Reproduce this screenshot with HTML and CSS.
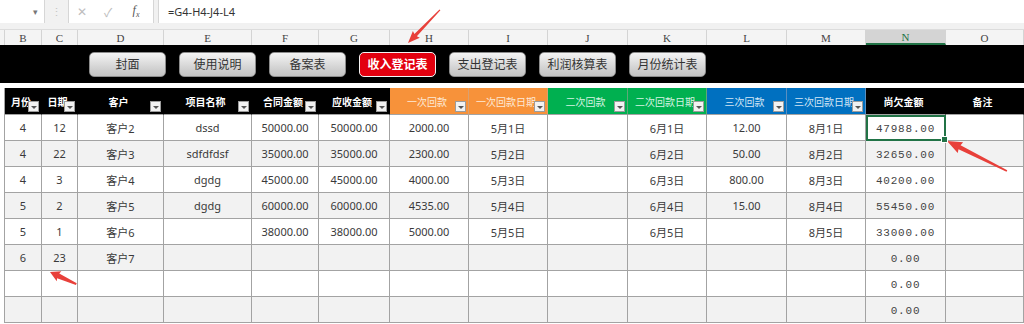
FILE: index.html
```html
<!DOCTYPE html>
<html lang="zh">
<head>
<meta charset="utf-8">
<title>收入登记表</title>
<link rel="stylesheet" href="styles.css">
</head>
<body>
<div class="topbar">
  <div class="namebox"><span class="caret">▾</span></div>
  <div class="dots">⋮</div>
  <div class="fxbox"><span class="ico">✕</span><span class="ico">✓</span><span class="fx">f<sub>x</sub></span></div>
  <div class="formula">=G4-H4-J4-L4</div>
</div>
<div class="letters">
  <div class="lc"></div><div class="lc">B</div><div class="lc">C</div><div class="lc">D</div><div class="lc">E</div><div class="lc">F</div><div class="lc">G</div><div class="lc">H</div><div class="lc">I</div><div class="lc">J</div><div class="lc">K</div><div class="lc">L</div><div class="lc">M</div><div class="lc sel">N</div><div class="lc">O</div>
</div>
<div class="strip">
  <div class="btn">封面</div>
  <div class="btn">使用说明</div>
  <div class="btn">备案表</div>
  <div class="btn active">收入登记表</div>
  <div class="btn">支出登记表</div>
  <div class="btn">利润核算表</div>
  <div class="btn">月份统计表</div>
</div>
<div class="gap"></div>
<div class="sheet">
  <div class="tr head">
    <div class="th">月份<i class="dd"></i></div>
    <div class="th">日期<i class="dd"></i></div>
    <div class="th">客户<i class="dd"></i></div>
    <div class="th">项目名称<i class="dd"></i></div>
    <div class="th">合同金额<i class="dd"></i></div>
    <div class="th">应收金额<i class="dd"></i></div>
    <div class="th orange">一次回款<i class="dd"></i></div>
    <div class="th orange">一次回款日期<i class="dd"></i></div>
    <div class="th green">二次回款<i class="dd"></i></div>
    <div class="th green">二次回款日期<i class="dd"></i></div>
    <div class="th blue">三次回款<i class="dd"></i></div>
    <div class="th blue">三次回款日期<i class="dd"></i></div>
    <div class="th">尚欠金额</div>
    <div class="th">备注</div>
  </div>
  <div class="tr">
    <div class="td">4</div><div class="td">12</div><div class="td">客户2</div><div class="td">dssd</div><div class="td">50000.00</div><div class="td">50000.00</div><div class="td">2000.00</div><div class="td">5月1日</div><div class="td"></div><div class="td">6月1日</div><div class="td">12.00</div><div class="td">8月1日</div><div class="td mono cur">47988.00<i class="handle"></i></div><div class="td"></div>
  </div>
  <div class="tr alt">
    <div class="td">4</div><div class="td">22</div><div class="td">客户3</div><div class="td">sdfdfdsf</div><div class="td">35000.00</div><div class="td">35000.00</div><div class="td">2300.00</div><div class="td">5月2日</div><div class="td"></div><div class="td">6月2日</div><div class="td">50.00</div><div class="td">8月2日</div><div class="td mono">32650.00</div><div class="td"></div>
  </div>
  <div class="tr">
    <div class="td">4</div><div class="td">3</div><div class="td">客户4</div><div class="td">dgdg</div><div class="td">45000.00</div><div class="td">45000.00</div><div class="td">4000.00</div><div class="td">5月3日</div><div class="td"></div><div class="td">6月3日</div><div class="td">800.00</div><div class="td">8月3日</div><div class="td mono">40200.00</div><div class="td"></div>
  </div>
  <div class="tr alt">
    <div class="td">5</div><div class="td">2</div><div class="td">客户5</div><div class="td">dgdg</div><div class="td">60000.00</div><div class="td">60000.00</div><div class="td">4535.00</div><div class="td">5月4日</div><div class="td"></div><div class="td">6月4日</div><div class="td">15.00</div><div class="td">8月4日</div><div class="td mono">55450.00</div><div class="td"></div>
  </div>
  <div class="tr">
    <div class="td">5</div><div class="td">1</div><div class="td">客户6</div><div class="td"></div><div class="td">38000.00</div><div class="td">38000.00</div><div class="td">5000.00</div><div class="td">5月5日</div><div class="td"></div><div class="td">6月5日</div><div class="td"></div><div class="td">8月5日</div><div class="td mono">33000.00</div><div class="td"></div>
  </div>
  <div class="tr alt">
    <div class="td">6</div><div class="td">23</div><div class="td">客户7</div><div class="td"></div><div class="td"></div><div class="td"></div><div class="td"></div><div class="td"></div><div class="td"></div><div class="td"></div><div class="td"></div><div class="td"></div><div class="td mono">0.00</div><div class="td"></div>
  </div>
  <div class="tr">
    <div class="td"></div><div class="td"></div><div class="td"></div><div class="td"></div><div class="td"></div><div class="td"></div><div class="td"></div><div class="td"></div><div class="td"></div><div class="td"></div><div class="td"></div><div class="td"></div><div class="td mono">0.00</div><div class="td"></div>
  </div>
  <div class="tr alt">
    <div class="td"></div><div class="td"></div><div class="td"></div><div class="td"></div><div class="td"></div><div class="td"></div><div class="td"></div><div class="td"></div><div class="td"></div><div class="td"></div><div class="td"></div><div class="td"></div><div class="td mono">0.00</div><div class="td"></div>
  </div>
</div>
<svg class="arrows" width="1024" height="324" viewBox="0 0 1024 324">
  <g fill="#e8403a">
    <polygon transform="translate(408,43) rotate(134)" points="-46,-0.6 -11,-1.7 -12,-4.8 0,0 -12,4.8 -11,1.7 -46,0.6"/>
    <polygon transform="translate(947,141) rotate(206.6)" points="-67,-0.8 -14,-2.3 -15,-6 0,0 -15,6 -14,2.3 -67,0.8"/>
    <polygon transform="translate(50,272) rotate(204.8)" points="-29,-1 -9,-2.6 -10,-5.5 0,0 -10,5.5 -9,2.6 -29,1"/>
  </g>
</svg>
</body>
</html>
```

FILE: styles.css
```css
body {
  margin: 0;
  width: 1024px;
  height: 324px;
  overflow: hidden;
  position: relative;
  background: #fff;
  font-family: "Noto Sans", "Noto Sans CJK SC", sans-serif;
  color: #333;
}

/* formula bar */
.topbar {
  height: 23px;
  padding-bottom: 7px;
  background: #f1f1f1;
  display: flex;
}
.namebox {
  width: 44px;
  background: #fff;
  border-right: 1px solid #d6d6d6;
  display: flex;
  justify-content: flex-end;
  align-items: center;
}
.caret {
  font-size: 9px;
  color: #777;
  margin-right: 6px;
}
.dots {
  width: 23px;
  display: flex;
  justify-content: center;
  align-items: center;
  color: #c4c4c4;
  font-size: 11px;
}
.fxbox {
  width: 84px;
  background: #fff;
  border-left: 1px solid #d6d6d6;
  border-right: 1px solid #d6d6d6;
  display: flex;
  align-items: center;
}
.ico {
  width: 26px;
  text-align: center;
  color: #bdbdbd;
  font-size: 12px;
}
.fx {
  width: 30px;
  text-align: center;
  font-family: "Liberation Serif", serif;
  font-style: italic;
  font-size: 12px;
  color: #555;
}
.fx sub { font-size: 8px; }
.formula {
  flex: 1;
  margin-left: 4px;
  background: #fff;
  border-left: 1px solid #d6d6d6;
  padding-left: 9px;
  display: flex;
  align-items: center;
  font-size: 11px;
  color: #333;
}

/* column letters */
.letters {
  height: 15px;
  display: grid;
  grid-template-columns: 5px 37px 36px 86px 88px 67px 71px 79px 79px 80px 79px 80px 79px 80px 78px;
  background: #f4f4f4;
  border-top: 1px solid #dcdcdc;
  margin-top: -1px;
}
.lc {
  border-right: 1px solid #d4d4d4;
  box-sizing: border-box;
  font-family: "Liberation Serif", serif;
  font-size: 11px;
  color: #444;
  display: flex;
  justify-content: center;
  align-items: center;
}
.lc.sel {
  background: #d4d4d4;
  color: #217346;
  border-bottom: 2px solid #217346;
}

/* navigation strip */
.strip {
  height: 38px;
  background: #000;
  display: flex;
  align-items: center;
  gap: 13px;
  padding-left: 89px;
  box-sizing: border-box;
}
.btn {
  width: 77px;
  height: 25px;
  box-sizing: border-box;
  border-radius: 5px;
  border: 1px solid #8c8c8c;
  background: linear-gradient(#f4f4f4, #d0d0d0 70%, #c4c4c4);
  display: flex;
  justify-content: center;
  align-items: center;
  font-size: 12px;
  color: #333;
}
.btn.active {
  background: #e3000f;
  border: 1px solid #f4f4f4;
  color: #fff;
  font-weight: bold;
}
.gap { height: 5px; background: #fff; }

/* sheet */
.sheet {
  margin-left: 4px;
  border-left: 1px solid #a3a3a3;
}
.tr {
  display: grid;
  grid-template-columns: 37px 36px 86px 88px 67px 71px 79px 79px 80px 79px 80px 79px 80px 78px;
}
.td, .th {
  position: relative;
  box-sizing: border-box;
  border-right: 1px solid #a3a3a3;
  border-bottom: 1px solid #a3a3a3;
  display: flex;
  justify-content: center;
  align-items: center;
  white-space: nowrap;
  overflow: hidden;
}
.td {
  height: 26px;
  font-size: 11px;
  color: #3a3a3a;
}
.tr.alt .td { background: #f2f2f2; }
.td.mono {
  font-family: "Liberation Mono", "Noto Sans CJK SC", monospace;
  font-size: 11px;
  letter-spacing: 0.8px;
  color: #444;
  padding-top: 3px;
}
.td.cur {
  overflow: visible;
  outline: 2px solid #217346;
  outline-offset: -2px;
  z-index: 2;
}
.handle {
  position: absolute;
  right: -3px;
  bottom: -3px;
  width: 5px;
  height: 5px;
  background: #217346;
  border: 1px solid #fff;
}
.th {
  height: 27px;
  background: #000;
  color: #fff;
  font-weight: bold;
  font-size: 10px;
  border-right-color: #000;
  border-bottom-color: #a3a3a3;
  padding-right: 4px;
}
.th.orange { background: #f7923a; color: #fde9d6; border-right-color: #d9a070; font-weight: normal; }
.th.green { background: #00b050; color: #d6f3e2; border-right-color: #60a878; font-weight: normal; }
.th.blue { background: #0070c0; color: #d4e6f5; border-right-color: #5a8fc0; font-weight: normal; }
.dd {
  position: absolute;
  right: 2px;
  bottom: 2px;
  width: 11px;
  height: 11px;
  box-sizing: border-box;
  background: #f2f2f2;
  border: 1px solid #9c9c9c;
}
.dd::after {
  content: "";
  position: absolute;
  left: 2px;
  top: 4px;
  border-left: 3px solid transparent;
  border-right: 3px solid transparent;
  border-top: 3px solid #555;
}

.arrows {
  position: absolute;
  left: 0;
  top: 0;
  pointer-events: none;
}
```
